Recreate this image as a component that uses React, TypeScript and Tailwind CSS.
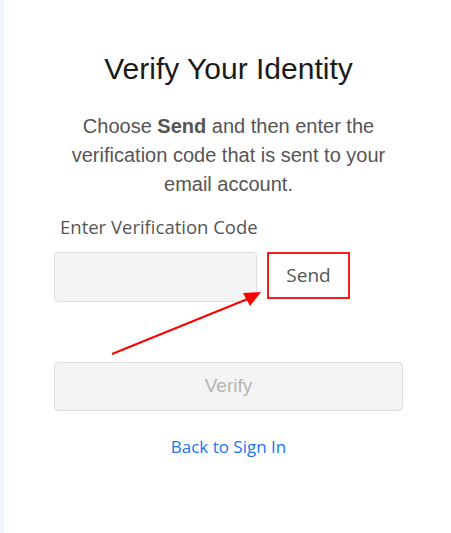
import React from "react";

export default function App() {
  return (
    <div className="relative w-[451px] h-[533px] bg-white flex overflow-hidden">
      <div className="w-[4px] h-full bg-[#f3f6fd]" />
      <div className="ml-[50px] w-[349px] flex flex-col">
        <h1 className="mt-[50px] text-center text-[30px] leading-[38px] text-[#1a1a1a] font-['Liberation_Sans',Arial,sans-serif]">
          Verify Your Identity
        </h1>
        <p className="mt-[24px] text-center text-[20px] leading-[29px] text-[#555555] font-['Liberation_Sans',Arial,sans-serif]">
          Choose <b className="font-bold">Send</b> and then enter the
          <br />
          verification code that is sent to your
          <br />
          email account.
        </p>
        <label className="mt-[15px] ml-[6px] text-[18.5px] leading-[26px] text-[#555555] font-['Open_Sans',sans-serif]">
          Enter Verification Code
        </label>
        <div className="mt-[12px] flex items-start gap-[10px]">
          <input
            className="w-[203px] h-[50px] rounded-[4px] border border-[#dedede] bg-[#f4f4f4] outline-none"
            readOnly
          />
          <div className="w-[83px] h-[47px] border-2 border-[#ff1a1a] flex items-center justify-center text-[19px] text-[#555555] font-['Open_Sans',sans-serif]">
            Send
          </div>
        </div>
        <div className="mt-[60px] h-[49px] rounded-[4px] border border-[#dedede] bg-[#f4f4f4] flex items-center justify-center text-[19px] text-[#b5b5b5] font-['Liberation_Sans',Arial,sans-serif]">
          Verify
        </div>
        <a className="mt-[23px] self-center text-[17px] leading-[26px] text-[#1a73f0] font-['Open_Sans',sans-serif]">
          Back to Sign In
        </a>
      </div>
      <svg
        className="absolute left-0 top-0 pointer-events-none"
        width="451"
        height="533"
        viewBox="0 0 451 533"
      >
        <line x1="112" y1="354" x2="250" y2="298" stroke="#ff0000" strokeWidth="2" />
        <polygon points="261,292 243,293 250,306" fill="#ff0000" />
      </svg>
    </div>
  );
}
